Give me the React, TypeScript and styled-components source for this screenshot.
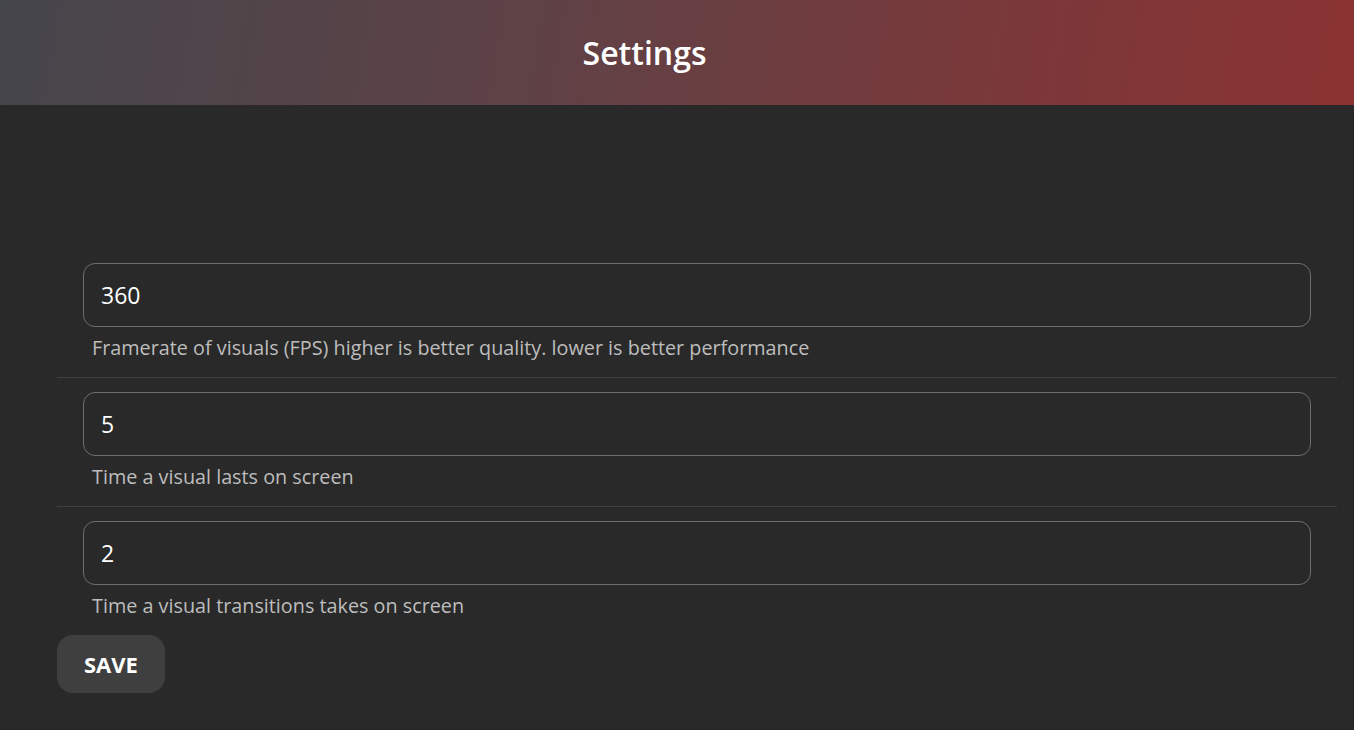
import React, { useState } from 'react'
import styled, { createGlobalStyle } from 'styled-components'

const GlobalStyle = createGlobalStyle`
  html, body {
    margin: 0;
    padding: 0;
    background: #292929;
    font-family: 'Open Sans', 'Noto Sans', sans-serif;
  }
`

const Page = styled.div`
  min-height: 730px;
  background: #292929;
  color: #fff;
`

const Header = styled.header`
  height: 105px;
  display: flex;
  align-items: center;
  justify-content: center;
  padding-right: 65px;
  background: linear-gradient(100deg, #45464c 0%, #5f4246 40%, #7b3839 75%, #8b3333 100%);
`

const Title = styled.h1`
  margin: 0;
  font-size: 32px;
  font-weight: 600;
  color: #fff;
`

const Form = styled.form`
  width: 1280px;
  margin-left: 57px;
  padding-top: 144px;
`

const Row = styled.div<{ $last?: boolean }>`
  display: flex;
  flex-direction: column;
  padding: 14px 26px 15px;
  border-bottom: ${(p) => (p.$last ? 'none' : '1px solid #3f3f3f')};
`

const Input = styled.input`
  box-sizing: border-box;
  height: 64px;
  width: 100%;
  padding: 0 17px;
  border: 1px solid #6e6e6e;
  border-radius: 12px;
  background: #292929;
  color: #fff;
  font-family: inherit;
  font-size: 23px;
  outline: none;
`

const Helper = styled.span`
  margin-top: 7px;
  padding-left: 9px;
  font-size: 19.8px;
  line-height: 28px;
  color: #bdbdbd;
`

const SaveButton = styled.button`
  height: 58px;
  padding: 0 27px;
  border: none;
  border-radius: 16px;
  background: #3f3f3f;
  color: #fff;
  font-family: inherit;
  font-size: 22px;
  font-weight: 700;
  cursor: pointer;
`

const fields = [
  { key: 'fps', value: '360', help: 'Framerate of visuals (FPS) higher is better quality. lower is better performance' },
  { key: 'duration', value: '5', help: 'Time a visual lasts on screen' },
  { key: 'transition', value: '2', help: 'Time a visual transitions takes on screen' },
]

export default function App() {
  const [values, setValues] = useState<Record<string, string>>(
    Object.fromEntries(fields.map((f) => [f.key, f.value]))
  )

  return (
    <Page>
      <GlobalStyle />
      <Header>
        <Title>Settings</Title>
      </Header>
      <Form onSubmit={(e) => e.preventDefault()}>
        {fields.map((f, i) => (
          <Row key={f.key} $last={i === fields.length - 1}>
            <Input
              value={values[f.key]}
              onChange={(e) => setValues({ ...values, [f.key]: e.target.value })}
            />
            <Helper>{f.help}</Helper>
          </Row>
        ))}
        <SaveButton type="submit">SAVE</SaveButton>
      </Form>
    </Page>
  )
}
